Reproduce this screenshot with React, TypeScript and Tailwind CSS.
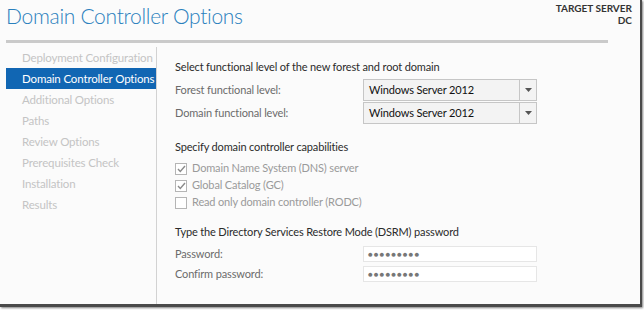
import React from "react";

const font = { fontFamily: 'Lato, "Open Sans", "Liberation Sans", sans-serif' };

function Dropdown() {
  return (
    <div className="flex h-[22px] w-[174px] border border-[#c6c6c6] bg-[#f3f3f3]">
      <div className="flex flex-1 items-center pl-[5px] text-[11px] tracking-[-0.15px] text-[#111]">Windows Server 2012</div>
      <div className="flex w-[17px] items-center justify-center border-l border-[#c6c6c6]">
        <svg width="7" height="4" viewBox="0 0 7 4"><path d="M0 0h7L3.5 4z" fill="#555" /></svg>
      </div>
    </div>
  );
}

function Check({ checked, label }: { checked: boolean; label: string }) {
  return (
    <div className="flex h-[17px] items-center gap-[5px]">
      <div className="flex h-[12px] w-[12px] items-center justify-center border border-[#b5b5b5] bg-white">
        {checked && (
          <svg width="9" height="8" viewBox="0 0 9 8"><path d="M1 4l2.3 2.5L8 1" stroke="#8a8a8a" strokeWidth="1.4" fill="none" /></svg>
        )}
      </div>
      <span className="text-[11px] tracking-[-0.15px] text-[#9a9a9a]">{label}</span>
    </div>
  );
}

export default function App() {
  const items = [
    "Deployment Configuration",
    "Domain Controller Options",
    "Additional Options",
    "Paths",
    "Review Options",
    "Prerequisites Check",
    "Installation",
    "Results",
  ];
  return (
    <div className="h-[310px] w-[644px] overflow-hidden bg-white" style={font}>
      <div className="flex h-[307px] w-[642px] flex-col border-b-[3px] border-r-[2px] border-[#4a4a4a] bg-[#fbfbfb] shadow-[1px_1px_2px_rgba(0,0,0,0.5)]">
        <div className="flex h-[40px] justify-between">
          <div className="pl-[6px] pt-[1px] text-[21px] font-light leading-[30px] tracking-[-0.3px] text-[#2a80bd]">
            Domain Controller Options
          </div>
          <div className="pr-[8px] pt-[2px] text-right text-[10px] font-bold leading-[12px] text-[#333]">
            <div>TARGET SERVER</div>
            <div>DC</div>
          </div>
        </div>
        <div className="ml-[6px] h-[3px] w-[602px] bg-[#cacaca]" />
        <div className="flex flex-1">
          <div className="mt-[4px] w-[151px] ml-[6px] border-r border-[#d2d2d2]">
            {items.map((it, i) => (
              <div
                key={it}
                className={
                  "flex h-[21px] items-center whitespace-nowrap pl-[16px] text-[11.5px] tracking-[-0.15px] " +
                  (i === 1 ? "bg-[#1166b3] text-white" : "text-[#c4c4c4]")
                }
              >
                {it}
              </div>
            ))}
          </div>
          <div className="flex flex-col pl-[18px] pt-[15px] text-[11px] tracking-[-0.15px]">
            <div className="h-[17px] leading-[17px] text-[#2b2b2b]">Select functional level of the new forest and root domain</div>
            <div className="mt-[4px] flex items-center">
              <div className="w-[188px] text-[#6b6b6b]">Forest functional level:</div>
              <Dropdown />
            </div>
            <div className="mt-[1px] flex items-center">
              <div className="w-[188px] text-[#6b6b6b]">Domain functional level:</div>
              <Dropdown />
            </div>
            <div className="mt-[14px] h-[17px] leading-[17px] text-[#2b2b2b]">Specify domain controller capabilities</div>
            <div className="mt-[5px] flex flex-col">
              <Check checked label="Domain Name System (DNS) server" />
              <Check checked label="Global Catalog (GC)" />
              <Check checked={false} label="Read only domain controller (RODC)" />
            </div>
            <div className="mt-[12px] h-[17px] leading-[17px] text-[#2b2b2b]">Type the Directory Services Restore Mode (DSRM) password</div>
            <div className="mt-[6px] flex items-center">
              <div className="w-[188px] text-[#6b6b6b]">Password:</div>
              <div className="flex h-[16px] w-[174px] items-center border border-[#e6e6e6] bg-white pl-[4px] text-[8px] tracking-[1px] text-[#777]">●●●●●●●●●</div>
            </div>
            <div className="mt-[3px] flex items-center">
              <div className="w-[188px] text-[#6b6b6b]">Confirm password:</div>
              <div className="flex h-[16px] w-[174px] items-center border border-[#e6e6e6] bg-white pl-[4px] text-[8px] tracking-[1px] text-[#777]">●●●●●●●●●</div>
            </div>
          </div>
        </div>
      </div>
    </div>
  );
}
